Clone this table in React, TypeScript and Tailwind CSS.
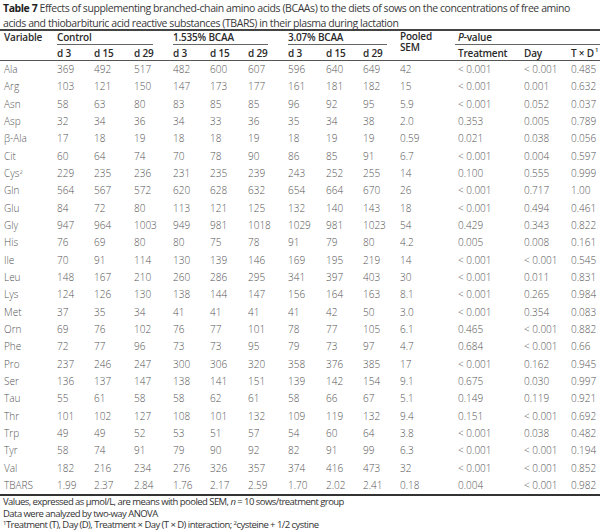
import React from 'react';

type Row = [React.ReactNode, ...string[]];

const rows: Row[] = [
  ['Ala', '369', '492', '517', '482', '600', '607', '596', '640', '649', '42', '< 0.001', '< 0.001', '0.485'],
  ['Arg', '103', '121', '150', '147', '173', '177', '161', '181', '182', '15', '< 0.001', '0.001', '0.632'],
  ['Asn', '58', '63', '80', '83', '85', '85', '96', '92', '95', '5.9', '< 0.001', '0.052', '0.037'],
  ['Asp', '32', '34', '36', '34', '33', '36', '35', '34', '38', '2.0', '0.353', '0.005', '0.789'],
  ['β-Ala', '17', '18', '19', '18', '18', '19', '18', '19', '19', '0.59', '0.021', '0.038', '0.056'],
  ['Cit', '60', '64', '74', '70', '78', '90', '86', '85', '91', '6.7', '< 0.001', '0.004', '0.597'],
  [<>Cys<sup className="text-[6px]">2</sup></>, '229', '235', '236', '231', '235', '239', '243', '252', '255', '14', '0.100', '0.555', '0.999'],
  ['Gln', '564', '567', '572', '620', '628', '632', '654', '664', '670', '26', '< 0.001', '0.717', '1.00'],
  ['Glu', '84', '72', '80', '113', '121', '125', '132', '140', '143', '18', '< 0.001', '0.494', '0.461'],
  ['Gly', '947', '964', '1003', '949', '981', '1018', '1029', '981', '1023', '54', '0.429', '0.343', '0.822'],
  ['His', '76', '69', '80', '80', '75', '78', '91', '79', '80', '4.2', '0.005', '0.008', '0.161'],
  ['Ile', '70', '91', '114', '130', '139', '146', '169', '195', '219', '14', '< 0.001', '< 0.001', '0.545'],
  ['Leu', '148', '167', '210', '260', '286', '295', '341', '397', '403', '30', '< 0.001', '0.011', '0.831'],
  ['Lys', '124', '126', '130', '138', '144', '147', '156', '164', '163', '8.1', '< 0.001', '0.265', '0.984'],
  ['Met', '37', '35', '34', '41', '41', '41', '41', '42', '50', '3.0', '< 0.001', '0.354', '0.083'],
  ['Orn', '69', '76', '102', '76', '77', '101', '78', '77', '105', '6.1', '0.465', '< 0.001', '0.882'],
  ['Phe', '72', '77', '96', '73', '73', '95', '79', '73', '97', '4.7', '0.684', '< 0.001', '0.66'],
  ['Pro', '237', '246', '247', '300', '306', '320', '358', '376', '385', '17', '< 0.001', '0.162', '0.945'],
  ['Ser', '136', '137', '147', '138', '141', '151', '139', '142', '154', '9.1', '0.675', '0.030', '0.997'],
  ['Tau', '55', '61', '58', '58', '62', '61', '58', '66', '67', '5.1', '0.149', '0.119', '0.921'],
  ['Thr', '101', '102', '127', '108', '101', '132', '109', '119', '132', '9.4', '0.151', '< 0.001', '0.692'],
  ['Trp', '49', '49', '52', '53', '51', '57', '54', '60', '64', '3.8', '< 0.001', '0.038', '0.482'],
  ['Tyr', '58', '74', '91', '79', '90', '92', '82', '91', '99', '6.3', '< 0.001', '< 0.001', '0.194'],
  ['Val', '182', '216', '234', '276', '326', '357', '374', '416', '473', '32', '< 0.001', '< 0.001', '0.852'],
  ['TBARS', '1.99', '2.37', '2.84', '1.76', '2.17', '2.59', '1.70', '2.02', '2.41', '0.18', '0.004', '< 0.001', '0.982'],
];

// grille de colonnes commune à l'en-tête et au corps
const cols = 'grid grid-cols-[53px_37px_40px_39px_37px_38px_40px_38px_37px_37px_58px_66px_47px_1fr] pl-[4px]';

export default function App() {
  return (
    <div className="w-[600px] h-[530px] bg-white overflow-hidden font-['Open_Sans',sans-serif] text-[#333]">
      {/* Titre */}
      <div className="h-[29px] px-[3px] pt-[1px] text-[10.5px] leading-[15px] tracking-[-0.42px] text-[#3a3a3a] whitespace-nowrap">
        <span className="font-bold text-[#222]">Table 7</span> Effects of supplementing branched-chain amino acids (BCAAs) to the diets of sows on the concentrations of free amino
        <br />
        acids and thiobarbituric acid reactive substances (TBARS) in their plasma during lactation
      </div>

      <div className="h-[2px] bg-[#444]" />

      {/* En-tête */}
      <div className={`${cols} text-[10px] font-semibold text-[#2a2a2a] leading-[12px] tracking-[-0.2px]`}>
        <div className="row-span-2">Variable</div>
        <div className="col-span-3 mr-[20px] h-[14px] border-b border-[#666]">Control</div>
        <div className="col-span-3 mr-[20px] h-[14px] border-b border-[#666]">1.535% BCAA</div>
        <div className="col-span-3 mr-[13px] h-[14px] border-b border-[#666]">3.07% BCAA</div>
        <div className="row-span-2 flex flex-col">
          <span className="leading-[11px]">Pooled</span>
          <span className="leading-[11px]">SEM</span>
        </div>
        <div className="col-span-3 ml-[-3px] pl-[3px] h-[14px] border-b border-[#666]">
          <span className="italic">P</span>-value
        </div>
        {['d 3', 'd 15', 'd 29', 'd 3', 'd 15', 'd 29', 'd 3', 'd 15', 'd 29'].map((d, i) => (
          <div key={i} className="h-[15px] flex items-center">{d}</div>
        ))}
        <div className="h-[15px] flex items-center">Treatment</div>
        <div className="h-[15px] flex items-center">Day</div>
        <div className="h-[15px] flex items-center">
          T × D<sup className="text-[6px] ml-[1px]">1</sup>
        </div>
      </div>

      <div className="h-px bg-[#555]" />

      {/* Données */}
      <div className="text-[10px] font-light text-[#555]">
        {rows.map((r, i) => (
          <div key={i} className={`${cols} h-[17.33px] items-center`}>
            {r.map((c, j) => (
              <div key={j} className="whitespace-nowrap">{c}</div>
            ))}
          </div>
        ))}
      </div>

      <div className="h-[2px] bg-[#333]" />

      {/* Notes */}
      <div className="px-[3px] text-[9.5px] leading-[11.5px] tracking-[-0.55px] text-[#333] whitespace-nowrap">
        <div>
          Values, expressed as μmol/L, are means with pooled SEM, <span className="italic">n</span> = 10 sows/treatment group
        </div>
        <div>Data were analyzed by two-way ANOVA</div>
        <div className="leading-[11px]">
          <sup className="text-[6px] leading-none">1</sup>Treatment (T), Day (D), Treatment × Day (T × D) interaction; <sup className="text-[6px] leading-none">2</sup>cysteine + 1/2 cystine
        </div>
      </div>
    </div>
  );
}
